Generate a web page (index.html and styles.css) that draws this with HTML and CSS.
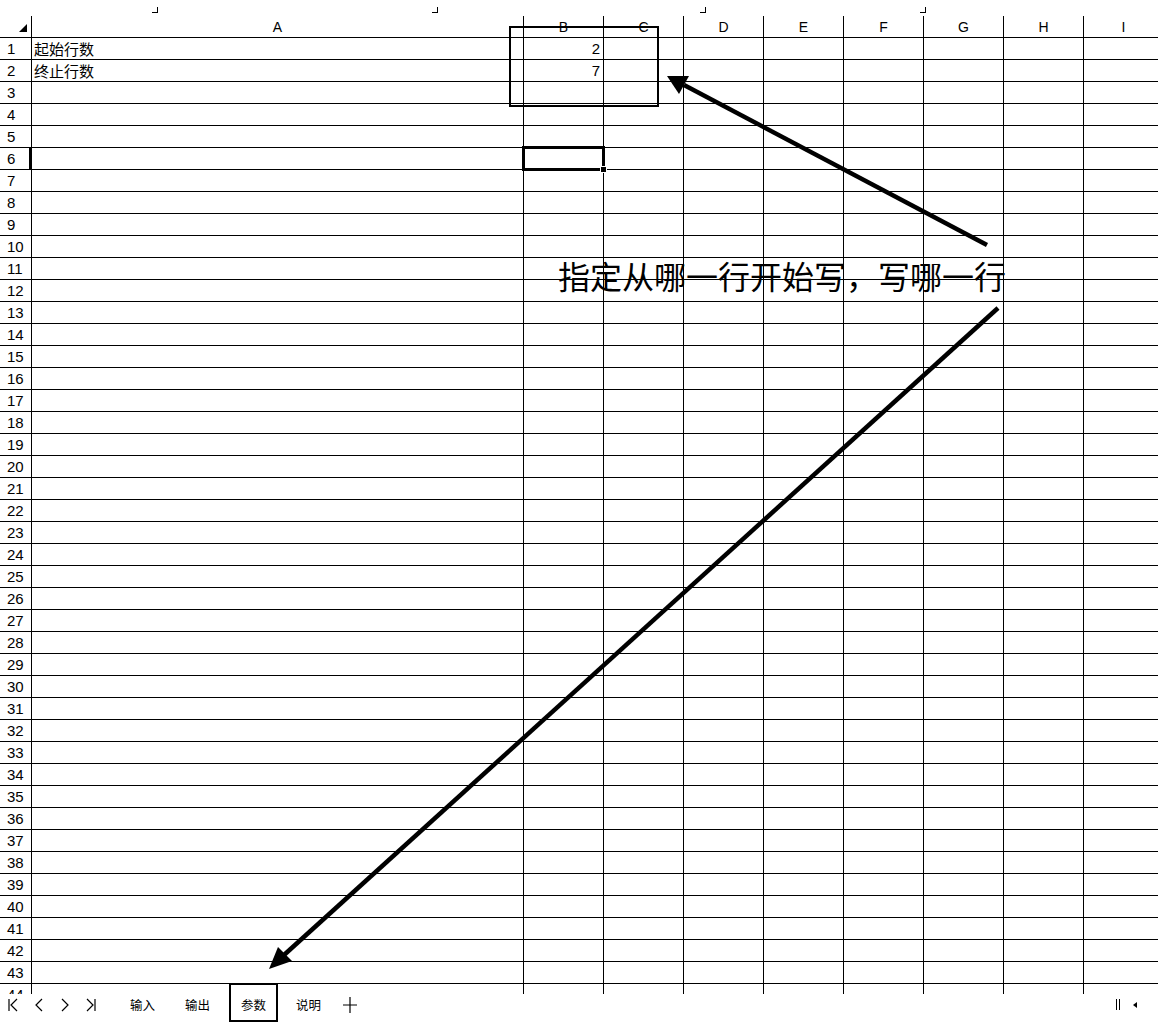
FILE: index.html
```html
<!DOCTYPE html>
<html lang="zh-CN">
<head>
  <meta charset="UTF-8" />
  <meta name="viewport" content="width=device-width, initial-scale=1.0" />
  <title>参数</title>
  <link rel="stylesheet" href="styles.css">
</head>
<body>
  <div class="topbar">
    <span class="mark"></span>
    <span class="mark m2"></span>
    <span class="mark m3"></span>
    <span class="mark m4"></span>
  </div>

  <div class="sheet-wrap">
    <div class="sheet" id="sheet">
      <!-- cells are built by the script below -->
    </div>
  </div>

  <div class="tabbar">
    <div class="nav">
      <span class="nav-btn"><svg width="12" height="14" viewBox="0 0 12 14"><path d="M2 1v12M10 1L4 7l6 6" /></svg></span>
      <span class="nav-btn"><svg width="12" height="14" viewBox="0 0 12 14"><path d="M9 1L3 7l6 6" /></svg></span>
      <span class="nav-btn"><svg width="12" height="14" viewBox="0 0 12 14"><path d="M3 1l6 6-6 6" /></svg></span>
      <span class="nav-btn"><svg width="12" height="14" viewBox="0 0 12 14"><path d="M2 1l6 6-6 6M10 1v12" /></svg></span>
    </div>
    <div class="tabs">
      <span class="tab">输入</span>
      <span class="tab">输出</span>
      <span class="tab active">参数</span>
      <span class="tab">说明</span>
      <span class="add"><svg width="14" height="16" viewBox="0 0 14 16"><path d="M7 0v16M0 8h14" /></svg></span>
    </div>
    <div class="scroll">
      <span class="pause"></span>
      <span class="left-tri"></span>
    </div>
  </div>

  <div class="callout-box"></div>
  <div class="note">指定从哪一行开始写，写哪一行</div>
  <svg class="arrows" width="1158" height="1024" viewBox="0 0 1158 1024">
    <line x1="987" y1="245" x2="684" y2="85" />
    <polygon points="667,76 689,76 679,94" />
    <line x1="998" y1="308" x2="284" y2="955" />
    <polygon points="269,969 278,947 292,961" />
  </svg>

  <script>
    const cols = ['A', 'B', 'C', 'D', 'E', 'F', 'G', 'H', 'I'];
    const data = {
      1: { A: '起始行数', B: '2' },
      2: { A: '终止行数', B: '7' }
    };
    const sheet = document.getElementById('sheet');

    function addCell(cls, text) {
      const cell = document.createElement('div');
      cell.className = 'cell ' + cls;
      if (text) cell.textContent = text;
      sheet.appendChild(cell);
      return cell;
    }

    const corner = addCell('corner', '');
    corner.innerHTML = '<svg width="8" height="8" viewBox="0 0 8 8"><polygon points="8,0 8,8 0,8" /></svg>';
    cols.forEach(c => addCell('colhead', c));

    for (let r = 1; r <= 44; r++) {
      addCell(r === 6 ? 'rowhead active' : 'rowhead', String(r));
      cols.forEach(c => {
        const value = data[r] && data[r][c];
        let cls = c === 'B' ? 'num' : 'txt';
        if (r === 6 && c === 'B') cls += ' selected';
        addCell(cls, value);
      });
    }
  </script>
</body>
</html>
```

FILE: styles.css
```css
body {
  margin: 0;
  width: 1158px;
  height: 1024px;
  overflow: hidden;
  position: relative;
  background: #fff;
  color: #000;
  font-family: "Liberation Sans", "Noto Sans CJK SC", sans-serif;
}
.topbar {
  height: 16px;
  display: flex;
  padding-left: 152px;
}
.mark {
  width: 5px;
  height: 5px;
  margin-top: 7px;
  border-right: 1px solid #000;
  border-bottom: 1px solid #000;
}
.m2 { margin-left: 274px; }
.m3 { margin-left: 262px; }
.m4 { margin-left: 214px; }
.sheet-wrap {
  height: 978px;
  overflow: hidden;
}
.sheet {
  display: grid;
  grid-template-columns: 32px 492px repeat(8, 80px);
  grid-auto-rows: 22px;
  width: 1164px;
}
.cell {
  box-sizing: border-box;
  border-right: 1px solid #000;
  border-bottom: 1px solid #000;
  display: flex;
  align-items: center;
  font-size: 15px;
  white-space: nowrap;
  overflow: hidden;
}
.corner {
  justify-content: flex-end;
  align-items: flex-end;
  padding: 0 4px 5px 0;
}
.corner svg {
  display: block;
}
.colhead {
  justify-content: center;
  font-size: 14px;
}
.rowhead {
  padding-left: 7px;
}
.rowhead.active {
  box-shadow: inset -2px 0 #000;
}
.txt {
  padding-left: 2px;
}
.num {
  justify-content: flex-end;
  padding-right: 3px;
}
.selected {
  position: relative;
  overflow: visible;
}
.selected::after {
  content: '';
  position: absolute;
  left: -2px;
  top: -2px;
  right: -2px;
  bottom: -2px;
  border: 3px solid #000;
}
.selected::before {
  content: '';
  position: absolute;
  right: -4px;
  bottom: -4px;
  width: 5px;
  height: 5px;
  background: #000;
  border: 1px solid #fff;
  z-index: 1;
}
.tabbar {
  position: relative;
  z-index: 1;
  margin-top: -11px;
  height: 41px;
  display: flex;
  align-items: flex-start;
  font-family: "Noto Sans CJK SC", sans-serif;
}
.nav {
  display: flex;
  height: 39px;
  align-items: center;
  padding-top: 4px;
  box-sizing: border-box;
}
.nav-btn {
  width: 26px;
  display: flex;
  justify-content: center;
}
.nav-btn svg,
.add svg {
  fill: none;
  stroke: #000;
  stroke-width: 1.2;
}
.tabs {
  display: flex;
  gap: 6px;
  margin-left: 14px;
  height: 39px;
}
.tab {
  box-sizing: border-box;
  width: 49px;
  height: 39px;
  display: flex;
  align-items: center;
  justify-content: center;
  padding-top: 3px;
  font-size: 12.5px;
}
.tab.active {
  border: 2px solid #000;
  background: #fff;
  margin-left: 1px;
}
.add {
  width: 22px;
  display: flex;
  align-items: center;
  justify-content: center;
  padding-top: 4px;
}
.scroll {
  margin-left: auto;
  margin-right: 21px;
  height: 39px;
  display: flex;
  align-items: center;
  gap: 13px;
  padding-top: 4px;
  box-sizing: border-box;
}
.pause {
  width: 2px;
  height: 11px;
  border-left: 1px solid #000;
  border-right: 1px solid #000;
}
.left-tri {
  width: 0;
  height: 0;
  border-top: 3px solid transparent;
  border-bottom: 3px solid transparent;
  border-right: 4px solid #000;
}
.callout-box {
  position: absolute;
  left: 509px;
  top: 26px;
  width: 150px;
  height: 81px;
  box-sizing: border-box;
  border: 2px solid #000;
}
.note {
  position: absolute;
  left: 558px;
  top: 259px;
  font-family: "Noto Sans CJK SC", sans-serif;
  font-size: 32px;
  line-height: 32px;
  white-space: nowrap;
}
.arrows {
  position: absolute;
  left: 0;
  top: 0;
  pointer-events: none;
}
.arrows line {
  stroke: #000;
  stroke-width: 4.5;
}
.arrows polygon {
  fill: #000;
}
```
